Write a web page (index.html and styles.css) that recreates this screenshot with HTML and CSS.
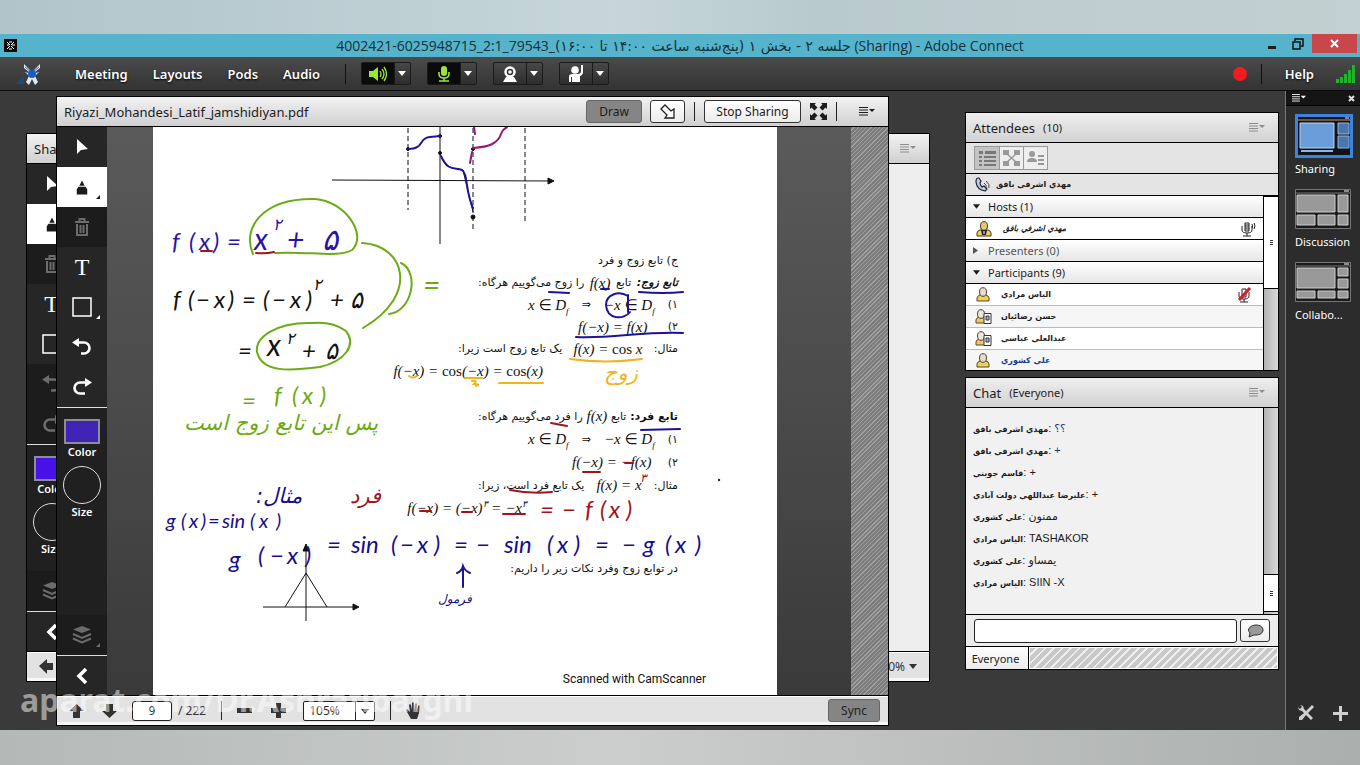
FILE: index.html
```
<!DOCTYPE html>
<html lang="en">
<head>
  <meta charset="utf-8">
  <title>Adobe Connect</title>
  <link rel="stylesheet" href="styles.css">
</head>
<body>
  <!-- shared icons -->
  <svg class="defs" aria-hidden="true">
    <symbol id="i-arrow" viewBox="0 0 16 18"><path d="M3 1v15l4-4 7-1z"/></symbol>
    <symbol id="i-pen" viewBox="0 0 16 18"><path d="M8 1l3 6H5zM4 8h8l2 3v6H2v-6z"/></symbol>
    <symbol id="i-trash" viewBox="0 0 16 18"><path fill="none" stroke="currentColor" stroke-width="2" d="M1 4h14M5.500 3V1h5v2M3 6v11h10V6M6.500 7v8M9.500 7v8"/></symbol>
    <symbol id="i-rect" viewBox="0 0 20 20"><path fill="none" stroke="currentColor" stroke-width="1.500" d="M1 1h18v18H1z"/></symbol>
    <symbol id="i-undo" viewBox="0 0 20 18"><path fill="none" stroke="currentColor" stroke-width="2.600" d="M4 4.500h8a5.500 5.500 0 0 1 0 11H9"/><path d="M0 4.500L7 0v9z"/></symbol>
    <symbol id="i-redo" viewBox="0 0 20 18"><path fill="none" stroke="currentColor" stroke-width="2.600" d="M16 4.500H8a5.500 5.500 0 0 0 0 11h5"/><path d="M20 4.500L13 0v9z"/></symbol>
    <symbol id="i-layers" viewBox="0 0 20 18"><path d="M10 0l9 3.500-9 3.500-9-3.500z"/><path fill="none" stroke="currentColor" stroke-width="2" d="M1 8l9 4 9-4M1 12.500l9 4 9-4"/></symbol>
    <symbol id="i-chev" viewBox="0 0 12 16"><path fill="none" stroke="currentColor" stroke-width="3.500" d="M10 1L3 8l7 7"/></symbol>
    <symbol id="i-menu" viewBox="0 0 16 9"><path fill="none" stroke="currentColor" d="M0 .5h9M0 3h9M0 5.500h9M0 8h9"/><path d="M10 2h6l-3 3z"/></symbol>
    <symbol id="i-down" viewBox="0 0 8 5"><path d="M0 0h8L4 5z"/></symbol>
    <symbol id="i-user" viewBox="0 0 14 15"><path fill="#f1cf5a" stroke="#5a4a20" d="M1 14v-3q0-2 3-3h6q3 1 3 3v3z"/><ellipse cx="7" cy="5" rx="3.500" ry="4.300" fill="#e9dcc4" stroke="#444"/></symbol>
    <symbol id="i-userdev" viewBox="0 0 17 15"><path fill="#f3c46a" stroke="#5a4a20" d="M1 14v-3q0-2 3-3h6v6z"/><ellipse cx="6" cy="5" rx="3.500" ry="4.300" fill="#eee6d8" stroke="#444"/><path fill="#fff" stroke="#333" d="M9 4.500h7v10H9z"/><path fill="#9fb6cf" stroke="#333" d="M11 7h3v4h-3z"/></symbol>
  </svg>

  <div class="band band-top"></div>

  <div class="app">
    <header class="titlebar">
      <svg class="app-icon" width="13" height="13" viewBox="0 0 13 13"><path d="M0 0h13v13H0z" fill="#0a0a0a"/><path d="M3 3l3 3M10 3L7 6M3 10l3-3M10 10L7 7M3 6h2M8 6h3M5 3h3M5 10h3" stroke="#fff" fill="none"/></svg>
      <h1>4002421-6025948715_2:1_79543_<bdi dir="rtl">جلسه ۲ - بخش ۱ (پنج‌شنبه ساعت ۱۴:۰۰ تا ۱۶:۰۰)</bdi> (Sharing) - Adobe Connect</h1>
      <div class="win-controls">
        <button aria-label="Minimize"><svg width="10" height="12" viewBox="0 0 10 12"><path d="M1 8h8v3H1z"/></svg></button>
        <button aria-label="Restore"><svg width="12" height="12" viewBox="0 0 12 12"><path d="M1 4h7v7H1zM3 3V1h8v7H9" fill="none" stroke="#111" stroke-width="1.500"/></svg></button>
        <button class="close" aria-label="Close"><svg width="9" height="9" viewBox="0 0 9 9"><path d="M1 1l7 7M8 1L1 8" stroke="#fff" stroke-width="2"/></svg></button>
      </div>
    </header>

    <nav class="menubar">
      <svg class="logo" width="26" height="22" viewBox="0 0 26 22"><path d="M0 21L8 12v9z" fill="#1d4a7c"/><path d="M8 1l5 5 3 4 3-4 5-5v4l-5 4h4l-4 4 3 6-3 3-3-6-3 6-3-3 3-6-4-4h4L8 5z" fill="#dbe9f8"/><path d="M9 4l6 5M23 4l-6 5M10 9l5 2M22 9l-5 2" stroke="#2b6cc0"/><circle cx="16" cy="11" r="4" fill="#1c5cb8"/></svg>
      <button class="menu">Meeting</button>
      <button class="menu">Layouts</button>
      <button class="menu">Pods</button>
      <button class="menu">Audio</button>
      <span class="sep"></span>
      <div class="split on">
        <button aria-label="Speaker"><svg width="18" height="16" viewBox="0 0 18 16"><path d="M0 5h4l5-4v14l-5-4H0z"/><path d="M11 5q2 3 0 6M13 3q4 5 0 10M15 1q5 7 0 14" fill="none" stroke="currentColor" stroke-width="1.300"/></svg></button>
        <button aria-label="Speaker options"><svg width="8" height="5"><use href="#i-down"/></svg></button>
      </div>
      <div class="split on">
        <button aria-label="Microphone"><svg width="12" height="16" viewBox="0 0 12 16"><rect x="3" y="0" width="6" height="10" rx="3"/><path d="M1 6v2q0 4 5 4t5-4V6M6 12v3M1 15h10" fill="none" stroke="currentColor" stroke-width="1.600"/></svg></button>
        <button aria-label="Microphone options"><svg width="8" height="5"><use href="#i-down"/></svg></button>
      </div>
      <div class="split">
        <button aria-label="Webcam"><svg width="14" height="16" viewBox="0 0 14 16"><path d="M3 11h8l3 5H0z"/><circle cx="7" cy="6" r="4.500" fill="#333" stroke="#fff" stroke-width="2.500"/><circle cx="7" cy="6" r="1.800"/></svg></button>
        <button aria-label="Webcam options"><svg width="8" height="5"><use href="#i-down"/></svg></button>
      </div>
      <div class="split">
        <button aria-label="Raise hand"><svg width="16" height="17" viewBox="0 0 16 17"><circle cx="7" cy="5" r="3.800"/><path d="M1 12q0-3 3-3h6q3 0 3-3V0h2v7q0 3-3 4v6H4v-5H3v5H1z"/></svg></button>
        <button aria-label="Raise hand options"><svg width="8" height="5"><use href="#i-down"/></svg></button>
      </div>
      <span class="grow"></span>
      <span class="record"></span>
      <span class="sep sep-rec"></span>
      <button class="menu">Help</button>
      <svg class="signal" width="20" height="18" viewBox="0 0 20 18"><path fill="#1fb52a" d="M0 14h3v4H0zM4 12h3v6H4zM8 9h3v9H8zM12 5h3v13h-3zM16 0h3v18h-3z"/></svg>
    </nav>

    <div class="stage">
      <main class="desk">
        <!-- pod left behind while the share is maximised -->
        <section class="win win-back">
          <div class="win-head"><span class="win-title">Share</span><span class="grow"></span><svg class="pale" width="16" height="9"><use href="#i-menu"/></svg></div>
          <div class="win-body">
            <div class="tools">
              <button aria-label="Select"><svg width="16" height="18"><use href="#i-arrow"/></svg></button>
              <button class="active" aria-label="Pen"><svg width="14" height="17"><use href="#i-pen"/></svg></button>
              <button class="off" aria-label="Delete"><svg width="16" height="18"><use href="#i-trash"/></svg></button>
              <button class="type">T</button>
              <button aria-label="Shape"><svg width="20" height="20"><use href="#i-rect"/></svg></button>
              <button class="off" aria-label="Undo"><svg width="20" height="18"><use href="#i-undo"/></svg></button>
              <button class="off" aria-label="Redo"><svg width="20" height="18"><use href="#i-redo"/></svg></button>
              <div class="ink">
                <span class="swatch bright"></span><span>Color</span>
                <span class="size"></span><span>Size</span>
              </div>
              <button class="off" aria-label="Layers"><svg width="20" height="18"><use href="#i-layers"/></svg></button>
              <button class="collapse" aria-label="Collapse"><svg width="12" height="16"><use href="#i-chev"/></svg></button>
            </div>
            <div class="blank"></div>
          </div>
          <div class="win-foot">
            <svg width="14" height="15" viewBox="0 0 14 15"><path d="M0 7l8-7v4h6v7H8v4z"/></svg>
            <span class="grow"></span><span>100%</span><svg class="foot-down" width="8" height="5"><use href="#i-down"/></svg>
          </div>
        </section>

        <section class="win win-front">
          <div class="win-head">
            <span class="win-title">Riyazi_Mohandesi_Latif_jamshidiyan.pdf</span>
            <span class="grow"></span>
            <button class="btn pressed draw">Draw</button>
            <button class="btn btn-icon" aria-label="Pointer"><svg width="16" height="16" viewBox="0 0 16 16"><path d="M1 5l4-4 6 6 3-2v9H5l2-3z" fill="#fff" stroke="#222" stroke-width="1.300"/></svg></button>
            <span class="rule"></span>
            <button class="btn stop">Stop Sharing</button>
            <button class="plain" aria-label="Full screen"><svg width="17" height="17" viewBox="0 0 17 17"><path d="M0 0h6L4.500 1.500l3 3-3 3-3-3L0 6zM17 0v6l-1.500-1.500-3 3-3-3 3-3L11 0zM0 17v-6l1.500 1.500 3-3 3 3-3 3L6 17zM17 17h-6l1.500-1.500-3-3 3-3 3 3L17 11z"/></svg></button>
            <span class="rule"></span>
            <button class="plain more" aria-label="Pod options"><svg width="16" height="9"><use href="#i-menu"/></svg></button>
          </div>
          <div class="win-body">
            <div class="tools">
              <button aria-label="Select"><svg width="16" height="18"><use href="#i-arrow"/></svg></button>
              <button class="active more-opt" aria-label="Pen"><svg width="14" height="17"><use href="#i-pen"/></svg></button>
              <button class="off" aria-label="Delete"><svg width="16" height="18"><use href="#i-trash"/></svg></button>
              <button class="type">T</button>
              <button class="more-opt" aria-label="Shape"><svg width="20" height="20"><use href="#i-rect"/></svg></button>
              <button aria-label="Undo"><svg width="20" height="18"><use href="#i-undo"/></svg></button>
              <button aria-label="Redo"><svg width="20" height="18"><use href="#i-redo"/></svg></button>
              <div class="ink">
                <span class="swatch"></span><span>Color</span>
                <span class="size"></span><span>Size</span>
              </div>
              <button class="off more-opt" aria-label="Layers"><svg width="20" height="18"><use href="#i-layers"/></svg></button>
              <button class="collapse" aria-label="Collapse"><svg width="12" height="16"><use href="#i-chev"/></svg></button>
            </div>
            <div class="viewer">
              <article class="page" lang="fa" dir="rtl">
                <div class="block">
                  <p class="row">ج) تابع زوج و فرد</p>
                  <p class="row w-200"><b><i>تابع زوج:</i></b><span>تابع</span><i class="math">f(x)</i><span>را زوج می‌گوییم هرگاه:</span></p>
                  <p class="row w-150"><span>۱)</span><i class="math">−x ∈ D<sub>f</sub></i><span>⇒</span><i class="math">x ∈ D<sub>f</sub></i></p>
                  <p class="row w-100"><span>۲)</span><i class="math">f(−x) = f(x)</i></p>
                  <p class="row w-220"><span>مثال:</span><i class="math">f(x) = <em>cos</em> x</i><span>یک تابع زوج است زیرا:</span></p>
                  <p class="row inset"><i class="math">f(−x) = <em>cos</em>(−x) = <em>cos</em>(x)</i></p>
                </div>
                <div class="block odd">
                  <p class="row w-200"><b>تابع فرد:</b><span>تابع</span><i class="math">f(x)</i><span>را فرد می‌گوییم هرگاه:</span></p>
                  <p class="row w-150"><span>۱)</span><i class="math">−x ∈ D<sub>f</sub></i><span>⇒</span><i class="math">x ∈ D<sub>f</sub></i></p>
                  <p class="row w-106"><span>۲)</span><i class="math">f(−x) = −f(x)</i></p>
                  <p class="row w-200"><span>مثال:</span><i class="math">f(x) = x</i><span>یک تابع فرد است، زیرا:</span></p>
                  <p class="row inset-more"><i class="math">f(−x) = (−x)<sup>۳</sup> = −x<sup>۳</sup></i></p>
                </div>
                <p class="row note">در توابع زوج وفرد نکات زیر را داریم:</p>
                <p class="scanned" dir="ltr">Scanned with CamScanner</p>

                <!-- graphs, pen strokes and handwritten notes -->
                <svg class="strokes" viewBox="153 127 624 568" direction="ltr">
                  <g class="graph">
                    <path d="M332 180L550 181M440 127V244M306 548V621M263 607H354M285 607L306 573L327 607"/>
                    <path stroke-dasharray="5 3" d="M408 128V210M473 128V230M525 128V223"/>
                    <path class="solid" d="M548 178l6 3-6 3zM303 551l3-7 3 7zM353 604l6 3-6 3z"/>
                    <circle cx="408" cy="149" r="1.500"/><circle cx="440" cy="136" r="1.500"/><circle cx="440" cy="153" r="1.500"/><circle cx="473" cy="149" r="1.500"/><circle cx="473" cy="217" r="2"/><circle cx="719" cy="480" r=".8"/>
                    <path d="M463 170L473 212"/>
                  </g>
                  <g class="pen navy">
                    <path d="M408 149C425 149 418 138 430 137L440 136M441 156C448 172 455 167 462 170C468 174 465 190 473 208"/>
                    <path d="M549 292l20 1M639 292q25 2 44 0M601 289h8M576 337C610 339 645 331 683 333M628 296C618 290 606 295 606 305C607 320 624 320 630 312M628 295V312M641 430l39-1"/>
                    <path d="M463 587V567M457 573q5-2 6-7q2 5 7 7"/>
                  </g>
                  <g class="pen magenta"><path d="M473 148C490 147 498 143 501 134Q503 129 507 127M474 127l1 7M472 152l-2 11"/></g>
                  <g class="pen green">
                    <path d="M253 254C242 230 260 198 315 199C345 201 368 235 352 250C338 258 310 251 275 253"/>
                    <path d="M362 243C405 245 420 295 363 328M401 263C420 272 412 312 389 314"/>
                    <path d="M312 323C275 322 255 338 257 352C262 373 290 371 320 367C345 361 357 345 346 331C338 325 325 322 312 323"/>
                  </g>
                  <g class="pen red">
                    <path d="M201 251h11M256 253q10 1 18-1M551 423l16 3M583 472h17M510 490q20 4 42 2M625 463h8M420 511h11M462 512h10M503 514h22"/>
                  </g>
                  <g class="pen gold">
                    <path d="M570 359q35 5 72 0M409 376q4 3 8 0M465 378h17M499 383l44 0M472 381q6-1 2 3q7 0 2 2"/>
                  </g>

                  <g class="hand blue">
                    <text y="250"><tspan x="172">f</tspan><tspan x="189">(</tspan><tspan x="199">x</tspan><tspan x="213">)</tspan><tspan x="227">=</tspan></text>
                    <text y="250" class="big"><tspan x="254">x</tspan><tspan x="287">+</tspan><tspan x="322">۵</tspan></text>
                    <text x="273" y="230" class="power">۲</text>
                  </g>
                  <g class="hand black">
                    <text y="308"><tspan x="173">f</tspan><tspan x="188">(</tspan><tspan x="196">−</tspan><tspan x="214">x</tspan><tspan x="228">)</tspan><tspan x="242">=</tspan><tspan x="263">(</tspan><tspan x="272">−</tspan><tspan x="290">x</tspan><tspan x="306">)</tspan><tspan x="330">+</tspan><tspan x="350">۵</tspan></text>
                    <text x="313" y="290" class="power">۲</text>
                    <text y="359"><tspan x="238">=</tspan><tspan x="302">+</tspan><tspan x="325">۵</tspan></text>
                    <text x="267" y="356" class="big">x</text>
                    <text x="286" y="344" class="power">۲</text>
                  </g>
                  <g class="hand leaf">
                    <text y="404"><tspan x="242" dy="5">=</tspan><tspan x="274" dy="-5">f</tspan><tspan x="292">(</tspan><tspan x="302">x</tspan><tspan x="320">)</tspan></text>
                    <text x="423" y="296" class="big">=</text>
                    <text x="184" y="430" class="fa">پس این تابع زوج است</text>
                  </g>
                  <g class="hand deep">
                    <text x="256" y="503" class="fa" direction="rtl" text-anchor="end">مثال:</text>
                    <text y="528" class="mid"><tspan x="166">g</tspan><tspan x="181">(</tspan><tspan x="189">x</tspan><tspan x="201">)</tspan><tspan x="208">=</tspan><tspan x="222">sin</tspan><tspan x="250">(</tspan><tspan x="259">x</tspan><tspan x="276">)</tspan></text>
                    <text y="564"><tspan x="229" dy="4">g</tspan><tspan x="258" dy="-4">(</tspan><tspan x="270">−</tspan><tspan x="287">x</tspan><tspan x="305">)</tspan></text>
                    <text y="553"><tspan x="327">=</tspan><tspan x="351">sin</tspan><tspan x="391">(</tspan><tspan x="400">−</tspan><tspan x="417">x</tspan><tspan x="434">)</tspan><tspan x="454">=</tspan><tspan x="476">−</tspan><tspan x="504">sin</tspan><tspan x="547">(</tspan><tspan x="557">x</tspan><tspan x="574">)</tspan><tspan x="595">=</tspan><tspan x="622">−</tspan><tspan x="643">g</tspan><tspan x="665">(</tspan><tspan x="675">x</tspan><tspan x="695">)</tspan></text>
                    <text x="438" y="603" class="fa small">فرمول</text>
                  </g>
                  <g class="hand crimson">
                    <text x="350" y="503" class="fa">فرد</text>
                    <text x="640" y="482" class="tiny">۳</text>
                    <text y="518"><tspan x="540">=</tspan><tspan x="562">−</tspan><tspan x="585">f</tspan><tspan x="600">(</tspan><tspan x="609">x</tspan><tspan x="626">)</tspan></text>
                  </g>
                  <g class="hand amber"><text x="604" y="380" class="fa">زوج</text></g>
                </svg>
              </article>
            </div>
            <div class="hatch"></div>
          </div>
          <div class="win-foot">
            <button class="plain" aria-label="Previous page"><svg width="15" height="14" viewBox="0 0 15 14"><path d="M7.500 0L15 7h-4v7H4V7H0z"/></svg></button>
            <button class="plain down" aria-label="Next page"><svg width="15" height="14" viewBox="0 0 15 14"><path d="M7.500 14L15 7h-4V0H4v7H0z"/></svg></button>
            <input class="page-no" type="text" value="9" aria-label="Page">
            <span>/ 222</span>
            <span class="rule"></span>
            <button class="plain" aria-label="Zoom out"><svg width="15" height="15" viewBox="0 0 15 15"><path d="M0 5h15v5H0z"/></svg></button>
            <button class="plain plus" aria-label="Zoom in"><svg width="15" height="15" viewBox="0 0 15 15"><path d="M5 0h5v5h5v5h-5v5H5v-5H0V5h5z"/></svg></button>
            <span class="zoom"><select aria-label="Zoom level"><option>105%</option></select></span>
            <span class="rule"></span>
            <button class="plain" aria-label="Pan"><svg width="16" height="17" viewBox="0 0 16 17"><path d="M5 17L1 10 0 8l1-1 3 3L3 3l1-1 1 1 1 5V1l1-1 1 1v7l1-6 1-1 1 1-.5 7L12 4l1-1 .500 2-.5 6-2 6z"/></svg></button>
            <span class="grow"></span>
            <button class="btn pressed sync">Sync</button>
          </div>
        </section>
      </main>

      <div class="pods">
        <section class="pod attendees">
          <div class="pod-head"><h2>Attendees</h2><span>(10)</span><span class="grow"></span><svg class="pale" width="16" height="9"><use href="#i-menu"/></svg></div>
          <div class="views">
            <button class="chosen" aria-label="List view"><svg width="17" height="16" viewBox="0 0 17 16"><path d="M0 1h4v3H0zM6 1h11v3H6zM0 6h3v2H0zM5 6h12v2H5zM0 10h3v2H0zM5 10h12v2H5zM0 14h3v2H0zM5 14h12v2H5z"/></svg></button>
            <button aria-label="Breakout view"><svg width="17" height="16" viewBox="0 0 17 16"><path d="M0 0h6v5H0zM11 0h6v5h-6zM0 11h6v5H0zM11 11h6v5h-6z"/><path d="M4 4l9 8M13 4l-9 8" stroke="currentColor" stroke-width="1.500"/></svg></button>
            <button aria-label="Status view"><svg width="17" height="16" viewBox="0 0 17 16"><circle cx="5" cy="4" r="3"/><path d="M0 12q0-4 5-4t5 4zM11 5h6v2h-6zM11 9h6v2h-6zM11 13h6v2h-6z"/></svg></button>
          </div>
          <div class="speaking"><svg width="15" height="15" viewBox="0 0 15 15"><path d="M3 1Q1 1 1 5q1 8 9 9l2-2-3-3-2 1Q5 8 5 6l1-2-2-3z" fill="#b9cfe6" stroke="#223" stroke-width="1.200"/><path d="M9 6q3 2 2 5M11 4q4 3 3 7" fill="none" stroke="#444"/></svg><bdi>مهدي اشرفي بافق</bdi></div>
          <div class="list">
            <ul>
              <li class="group"><svg width="7" height="5"><use href="#i-down"/></svg>Hosts (1)</li>
              <li class="host"><svg width="16" height="16" viewBox="0 0 16 16"><path fill="#f1cf5a" stroke="#443510" d="M1 15v-3q0-2 3-3h8q3 1 3 3v3z"/><ellipse cx="8" cy="5" rx="3.500" ry="4.300" fill="#e9c96a" stroke="#333"/><path d="M5 9h6l-1 5H6z" fill="#223"/><path d="M8 10v3" stroke="#fff"/></svg><bdi><i>مهدي اشرفي بافق</i></bdi><span class="grow"></span><svg width="16" height="16" viewBox="0 0 16 16"><path d="M4 2h4v8H4zM1 5v4q0 3 5 3t5-3V5M6 12v3M2 15h8M4 4h4M4 6h4M4 8h4M13 2q2 3 0 6M11 3q1 2 0 4" fill="none" stroke="#222"/></svg></li>
              <li class="group closed"><svg width="5" height="7" viewBox="0 0 5 7"><path d="M0 0v7l5-3.500z"/></svg>Presenters (0)</li>
              <li class="group"><svg width="7" height="5"><use href="#i-down"/></svg>Participants (9)</li>
              <li><svg width="14" height="15"><use href="#i-user"/></svg><bdi>الياس مرادي</bdi><span class="grow"></span><svg class="muted" width="14" height="16" viewBox="0 0 14 16"><path d="M4 2h4v8H4zM1 5v4q0 3 5 3t5-3V5M6 12v3M2 15h8" fill="none" stroke="#222"/><path d="M1 13L12 1" stroke="#d21f2b" stroke-width="3"/></svg></li>
              <li class="alt"><svg width="17" height="15"><use href="#i-userdev"/></svg><bdi>حسن رضائيان</bdi></li>
              <li><svg width="17" height="15"><use href="#i-userdev"/></svg><bdi>عبدالعلي عباسي</bdi></li>
              <li class="alt me"><svg width="14" height="15"><use href="#i-user"/></svg><bdi>علي كشوري</bdi></li>
            </ul>
            <div class="scroll"><span class="thumb long"></span></div>
          </div>
        </section>

        <section class="pod chat">
          <div class="pod-head"><h2>Chat</h2><span>(Everyone)</span><span class="grow"></span><svg class="pale" width="16" height="9"><use href="#i-menu"/></svg></div>
          <div class="list">
            <div class="log">
              <p><bdi>مهدي اشرفي بافق</bdi>: <span class="own">؟؟</span></p>
              <p><bdi>مهدي اشرفي بافق</bdi>: <span class="own">+</span></p>
              <p><bdi>قاسم جويني</bdi>: <span>+</span></p>
              <p><bdi>عليرضا عبداللهي دولت آبادي</bdi>: <span>+</span></p>
              <p><bdi>علي كشوري</bdi>: <span>ممنون</span></p>
              <p><bdi>الياس مرادي</bdi>: <span>TASHAKOR</span></p>
              <p><bdi>علي كشوري</bdi>: <span>یمساو</span></p>
              <p><bdi>الياس مرادي</bdi>: <span>SIIN -X</span></p>
            </div>
            <div class="scroll bottom"><span class="thumb"></span></div>
          </div>
          <form class="compose">
            <input type="text" aria-label="Message">
            <button type="button" class="btn" aria-label="Send"><svg width="17" height="14" viewBox="0 0 17 14"><path d="M9 1c4 0 7 2 7 5s-3 5-7 5H7l-5 2 1-4C-1 5 4 1 9 1z" fill="#999" stroke="#333"/></svg></button>
          </form>
          <div class="tabs"><button>Everyone</button><span></span></div>
        </section>
      </div>

      <aside class="layouts">
        <div class="layouts-head"><svg width="14" height="8"><use href="#i-menu"/></svg><svg width="7" height="7" viewBox="0 0 7 7"><path d="M1 1l5 5M6 1L1 6" stroke="#ddd" stroke-width="2"/></svg></div>
        <button class="layout current"><svg width="58" height="44" viewBox="0 0 58 44"><path d="M1.500 1.500h55v41h-55z" fill="#101418" stroke="#3b83dc" stroke-width="3"/><path d="M3 6h52" stroke="#c8966a"/><path d="M50 4h4" stroke="#fff"/><path d="M5 9h34v25H5z" fill="#6b9ddb" stroke="#b8d4f4"/><path d="M6 37h32" stroke="#8fb4e0" stroke-width="2"/><path d="M43 9h11v11H43zM43 22h11v12H43z" fill="#4a76ac" stroke="#8fb4e0"/></svg>Sharing</button>
        <button class="layout"><svg width="56" height="40" viewBox="0 0 56 40"><path d="M.5.5h55v39H.5z" fill="#1a1a1a" stroke="#777"/><path d="M1 4h54" stroke="#777"/><path d="M49 2h5" stroke="#fff"/><path d="M2 6h38v17H2zM43 6h10v17H43zM2 26h18v10H2zM23 26h17v10H23zM43 26h10v10H43z" fill="#999" stroke="#ccc"/></svg>Discussion</button>
        <button class="layout"><svg width="56" height="40" viewBox="0 0 56 40"><path d="M.5.5h55v39H.5z" fill="#1a1a1a" stroke="#777"/><path d="M1 4h54" stroke="#777"/><path d="M49 2h5" stroke="#fff"/><path d="M2 6h38v20H2zM43 6h10v8H43zM43 17h10v9H43zM2 29h18v7H2zM23 29h17v7H23zM43 29h10v7H43z" fill="#999" stroke="#ccc"/></svg>Collabo...</button>
        <div class="layouts-foot">
          <button class="plain" aria-label="Customise"><svg width="18" height="17" viewBox="0 0 18 17"><path d="M3 1l3 1 1 3 9 9-2 2-9-9-3-1-1-3 2 2 2-2zM15 1l2 2-6 6-2-2zM7 9l2 2-4 5-3 0 0-3z" fill="#d0d0d0"/></svg></button>
          <button class="plain" aria-label="Add layout"><svg width="16" height="16" viewBox="0 0 16 16"><path d="M6 1h3v6h6v3H9v6H6v-6H0V7h6z" fill="#d0d0d0"/></svg></button>
        </div>
      </aside>
    </div>

    <div class="watermark">aparat.com/Dr.Ashrafibafghi</div>
  </div>

  <div class="band band-bottom"></div>
</body>
</html>
```
FILE: styles.css
```
* {
box-sizing: border-box;
}

body {
margin: 0;
height: 100vh;
display: grid;
grid-template-rows: 34px 1fr 35px;
grid-template-columns: minmax(0, 1fr);
font-family: "Noto Sans", "DejaVu Sans", sans-serif;
font-size: 12px;
color: #1c1c1c;
overflow: hidden;
}

h1, h2, p, ul {
margin: 0;
padding: 0;
font-weight: normal;
}

button, input, select {
font: inherit;
color: inherit;
margin: 0;
padding: 0;
border: none;
background: none;
border-radius: 0;
}

svg {
display: block;
flex: none;
fill: currentColor;
}

.defs {
position: absolute;
width: 0;
height: 0;
}

.grow {
flex: 1;
}

.band-top {
background: linear-gradient(90deg, #b0c4ca, #c6d6da 45%, #b9cace 60%, #c3d0d2);
}

.band-bottom {
background: linear-gradient(90deg, #b4b8b6, #cbcecc 45%, #bfc2c0 65%, #abafad);
}

.app {
position: relative;
display: flex;
flex-direction: column;
min-height: 0;
background: #3a3a3a;
}

/* title bar */
.titlebar {
display: flex;
align-items: center;
height: 23px;
padding-left: 4px;
background: #55b4cb;
}

.titlebar h1 {
flex: 1;
padding-left: 84px;
text-align: center;
font-family: "Open Sans", "DejaVu Sans", sans-serif;
font-size: 14px;
line-height: 22px;
color: #12303a;
white-space: nowrap;
}

.win-controls {
display: flex;
align-self: flex-start;
padding-right: 3px;
}

.win-controls button {
width: 26px;
height: 19px;
display: grid;
place-items: center;
}

.win-controls .close {
width: 45px;
margin-left: 1px;
background: #c9464a;
}

/* menu bar */
.menubar {
display: flex;
align-items: center;
height: 34px;
padding: 0 4px 0 16px;
background: linear-gradient(#4b4b4b, #333);
border-bottom: 1px solid #0c0c0c;
color: #fff;
}

.menu {
margin-right: 25px;
font-size: 13px;
font-weight: 600;
text-shadow: 0 1px 2px #000;
}

.logo {
margin-right: 33px;
}

.sep {
width: 1px;
height: 20px;
margin-right: 15px;
background: #111;
}

.split {
display: flex;
height: 23px;
margin-right: 16px;
border: 1px solid #1a1a1a;
border-radius: 2px;
background: linear-gradient(#484848, #2e2e2e);
}

.split button {
width: 32px;
display: grid;
place-items: center;
}

.split button + button {
width: 16px;
border-left: 1px solid #1a1a1a;
}

.split.on button:first-child {
background: #0b0b0b;
color: #9be53a;
}

.record {
width: 14px;
height: 14px;
border-radius: 50%;
background: #ef1d20;
}

.sep-rec {
margin: 0 23px 0 14px;
}

.sep-rec + .menu {
margin-right: 22px;
}

/* stage */
.stage {
flex: 1;
display: flex;
min-height: 0;
}

.desk {
flex: 1;
position: relative;
margin-right: 35px;
}

.win {
position: absolute;
display: flex;
flex-direction: column;
border: 1px solid #000;
background: #ececec;
overflow: hidden;
}

.win-back {
inset: 42px 0 48px 26px;
}

.win-front {
inset: 5px 41px 4px 56px;
}

.win-head {
display: flex;
align-items: center;
flex: none;
height: 30px;
padding: 0 13px 0 7px;
background: linear-gradient(#f2f2f2, #d0d0d0);
border-bottom: 1px solid #000;
white-space: nowrap;
}

.win-title {
font-size: 13px;
}

.win-body {
flex: 1;
display: flex;
min-height: 0;
}

.win-foot {
display: flex;
align-items: center;
flex: none;
height: 30px;
padding: 0 8px 0 12px;
background: #e2e2e2;
border-top: 1px solid #000;
box-shadow: inset 0 1px #fff, inset 0 -3px #f8f8f8;
color: #333;
}

.foot-down {
margin: 0 4px;
}

.pale {
color: #8c8c8c;
}

.btn {
height: 23px;
padding: 0 14px;
border: 1px solid #333;
border-radius: 3px;
background: linear-gradient(#fff, #ececec);
display: grid;
place-items: center;
}

.btn.pressed {
background: #858585;
border-color: #666;
}

.draw {
width: 56px;
padding: 0;
}

.btn-icon {
width: 35px;
padding: 0;
margin: 0 9px 0 8px;
}

.rule {
width: 1px;
height: 19px;
background: #222;
}

.stop {
width: 97px;
padding: 0;
margin: 0 9px;
}

.plain {
display: grid;
place-items: center;
}

.stop ~ .rule {
margin: 0 22px 0 9px;
}

/* drawing tools */
.tools {
width: 50px;
flex: none;
display: flex;
flex-direction: column;
background: #202020;
color: #fff;
}

.win-back .tools {
width: 49px;
}

.tools button {
position: relative;
flex: none;
height: 40px;
display: grid;
place-items: center;
background: #262626;
}

.tools .active {
background: #fff;
color: #1a1a1a;
}

.tools .off {
background: #1c1c1c;
color: #6c6c6c;
}

.tools .type {
font-family: "Liberation Serif", serif;
font-size: 24px;
}

.more-opt::after {
content: "";
position: absolute;
right: 7px;
bottom: 8px;
border: 2px solid;
border-color: transparent currentColor currentColor transparent;
}

.ink {
flex: 1;
display: flex;
flex-direction: column;
align-items: center;
padding-top: 11px;
border-top: 1px solid #ddd;
font-size: 11px;
font-weight: 600;
line-height: 15px;
}

.swatch {
width: 36px;
height: 25px;
border: 2px solid #8d8d95;
background: #4023b4;
}

.swatch.bright {
background: #4a10e8;
}

.size {
width: 38px;
height: 38px;
margin-top: 7px;
border: 1px solid #ddd;
border-radius: 50%;
}

.tools .collapse {
border-top: 1px solid #ddd;
background: #262626;
}

.blank {
flex: 1;
background: #eee;
}

/* pdf viewer */
.viewer {
flex: 1;
min-width: 0;
overflow: hidden;
padding-left: 46px;
background: linear-gradient(#5a5a5a, #3a3a3a);
}

.page {
position: relative;
width: 624px;
min-height: 100%;
padding: 123px 99px 0 0;
background: #fff;
color: #111;
font-family: "DejaVu Sans", sans-serif;
font-size: 11px;
}

.row {
display: flex;
justify-content: space-between;
line-height: 22px;
height: 22px;
white-space: nowrap;
}

.odd {
margin-top: 23px;
}

.odd .row {
height: 23px;
line-height: 23px;
}

.w-100 { width: 100px; }
.w-106 { width: 106px; }
.w-150 { width: 150px; }
.w-200 { width: 200px; }
.w-220 { width: 220px; }

.inset {
padding-right: 135px;
}

.odd .inset-more {
padding-right: 151px;
}

.math {
direction: ltr;
unicode-bidi: isolate;
font-family: "Liberation Serif", "DejaVu Sans", serif;
font-size: 15px;
}

.math em {
font-style: normal;
}

.math sub, .math sup {
font-size: 9px;
line-height: 0;
}

.note {
margin-top: 38px;
}

.scanned {
margin-top: 88px;
margin-right: -28px;
text-align: right;
font-family: Roboto, sans-serif;
font-size: 12px;
line-height: 22px;
}

.strokes {
position: absolute;
top: 0;
left: 0;
width: 624px;
height: 568px;
direction: ltr;
}

.graph {
fill: #111;
stroke: #111;
}

.graph path {
fill: none;
}

.graph .solid {
fill: #111;
}

.pen {
fill: none;
stroke-width: 2;
stroke-linecap: round;
}

.navy { stroke: #1c1496; }
.magenta { stroke: #9c1478; }
.green { stroke: #6cab16; }
.red { stroke: #a01420; }
.gold { stroke: #efb51c; }

.hand {
font-family: Lato, "DejaVu Sans", sans-serif;
font-style: italic;
font-size: 24px;
}

.hand .big {
font-size: 30px;
}

.hand .mid {
font-size: 20px;
}

.hand .power {
font-size: 16px;
}

.hand .tiny {
font-size: 12px;
}

.hand .fa {
font-family: "DejaVu Sans", sans-serif;
font-size: 21px;
}

.hand .fa.small {
font-size: 12px;
}

.blue { fill: #2a14a8; }
.black { fill: #111; }
.leaf { fill: #6cab16; }
.deep { fill: #160e8c; }
.crimson { fill: #a01420; }
.amber { fill: #efb51c; }

.hatch {
width: 37px;
background: repeating-linear-gradient(135deg, #7c7c7c 0 2px, #a0a0a0 2px 3px);
}

/* viewer footer */
.down {
margin: 0 15px 0 18px;
}

.page-no {
width: 40px;
height: 20px;
margin-right: 6px;
border: 1px solid #222;
border-radius: 3px;
background: #fff;
text-align: center;
}

.win-foot .rule {
margin: 0 15px;
}

.plus {
margin: 0 17px 0 19px;
}

.zoom {
position: relative;
width: 72px;
height: 20px;
border: 1px solid #222;
border-radius: 2px;
background: #fff;
}

.zoom select {
appearance: none;
width: 100%;
height: 18px;
padding-left: 5px;
}

.zoom::after {
content: "";
position: absolute;
right: 5px;
top: 7px;
border: 4px solid transparent;
border-top: 5px solid #333;
border-bottom: none;
pointer-events: none;
}

.zoom::before {
content: "";
position: absolute;
right: 18px;
top: 0;
bottom: 0;
border-left: 1px solid #222;
}

.sync {
width: 52px;
padding: 0;
color: #222;
}

/* pods */
.pods {
width: 314px;
flex: none;
display: flex;
flex-direction: column;
gap: 6px;
padding: 21px 0 60px;
margin-right: 6px;
}

.pod {
display: flex;
flex-direction: column;
min-height: 0;
border: 1px solid #000;
background: #fff;
}

.attendees {
flex: 0 0 259px;
}

.chat {
flex: 1;
}

.pod-head {
display: flex;
align-items: center;
gap: 8px;
flex: none;
height: 30px;
padding: 0 13px 0 7px;
background: linear-gradient(#eee, #d2d2d2);
border-bottom: 1px solid #000;
font-size: 11px;
}

.pod-head h2 {
font-size: 13px;
}

.views {
display: flex;
align-items: center;
flex: none;
height: 31px;
padding-left: 8px;
background: #e4e4e4;
border-bottom: 1px solid #000;
color: #999;
}

.views button {
width: 25px;
height: 24px;
display: grid;
place-items: center;
border: 1px solid #999;
margin-right: -1px;
background: #eee;
}

.views .chosen {
background: #c4c4c4;
color: #777;
width: 26px;
}

.speaking {
display: flex;
align-items: center;
gap: 6px;
flex: none;
height: 22px;
padding-left: 9px;
background: #e4e4e4;
border-bottom: 1px solid #000;
}

bdi {
font-family: "DejaVu Sans", sans-serif;
}

.pods bdi {
font-size: 8px;
font-weight: bold;
}

.list {
flex: 1;
display: flex;
min-height: 0;
overflow: hidden;
}

.list ul {
flex: 1;
list-style: none;
}

.list li {
display: flex;
align-items: center;
height: 22px;
padding: 0 6px 0 10px;
border-bottom: 1px solid #bbb;
}

.list li bdi {
margin-left: 9px;
}

.list li > svg:first-child {
margin-right: 2px;
}

.list li > svg[width="17"] {
margin: 0 0 0 -1px;
}

.list .muted {
margin-right: 5px;
}

.list .alt {
background: #f6f6f6;
}

.list .me {
color: #143c94;
}

.list .host {
border-color: #000;
}

.list .group {
gap: 6px;
padding-left: 7px;
background: linear-gradient(#fff, #e6e6e6);
border-color: #000;
font-size: 11px;
}

.list .group.closed {
color: #555;
gap: 8px;
}

.scroll {
width: 15px;
flex: none;
display: flex;
flex-direction: column;
border-left: 1px solid #000;
background: linear-gradient(90deg, #b4b4b4, #d8d8d8);
}

.thumb {
height: 38px;
display: grid;
place-items: center;
background: #fff;
border: solid #000;
border-width: 1px 0;
}

.thumb::before {
content: "";
width: 3px;
height: 5px;
background: repeating-linear-gradient(#333 0 1px, #fff 1px 2px);
}

.thumb.long {
height: 93px;
}

.scroll.bottom {
justify-content: flex-end;
padding-bottom: 2px;
}

.log {
flex: 1;
padding: 9px 7px;
background: #f1f1f1;
font-family: "Liberation Sans", "DejaVu Sans", sans-serif;
font-size: 11px;
line-height: 22px;
}

.log p {
height: 22px;
white-space: nowrap;
}

.own {
color: #1c3478;
}

.compose {
display: flex;
align-items: center;
gap: 3px;
flex: none;
height: 32px;
padding: 0 8px;
border-top: 1px solid #000;
background: #ececec;
}

.compose input {
flex: 1;
min-width: 0;
height: 24px;
border: 1px solid #222;
border-radius: 3px;
background: #fff;
}

.compose .btn {
width: 30px;
padding: 0;
}

.tabs {
display: flex;
flex: none;
height: 23px;
border-top: 1px solid #000;
}

.tabs button {
width: 63px;
padding-right: 3px;
font-size: 11px;
border-right: 1px solid #000;
background: linear-gradient(#fff, #ececec);
}

.tabs span {
flex: 1;
margin: 1px;
background: repeating-linear-gradient(135deg, #c8c8c8 0 4px, #eee 4px 6px);
}

/* layouts bar */
.layouts {
width: 75px;
flex: none;
display: flex;
flex-direction: column;
border-left: 1px solid #777;
background: #2c2c2c;
color: #fff;
}

.layouts-head {
display: flex;
justify-content: space-between;
align-items: center;
height: 15px;
margin-bottom: 8px;
padding: 0 5px 0 6px;
background: #151515;
border-bottom: 1px solid #000;
}

.layout {
display: flex;
flex-direction: column;
gap: 3px;
height: 73px;
padding-left: 9px;
text-align: left;
font-size: 11px;
line-height: 15px;
}

.layout:not(.current) {
padding-top: 2px;
gap: 5px;
}

.layouts-foot {
display: flex;
justify-content: space-between;
margin-top: auto;
padding: 0 11px 9px;
}

/* channel name over the video */
.watermark {
position: absolute;
left: 20px;
bottom: 10px;
font-size: 32px;
line-height: 40px;
font-weight: bold;
color: rgba(255, 255, 255, 0.5);
white-space: nowrap;
pointer-events: none;
}
```
